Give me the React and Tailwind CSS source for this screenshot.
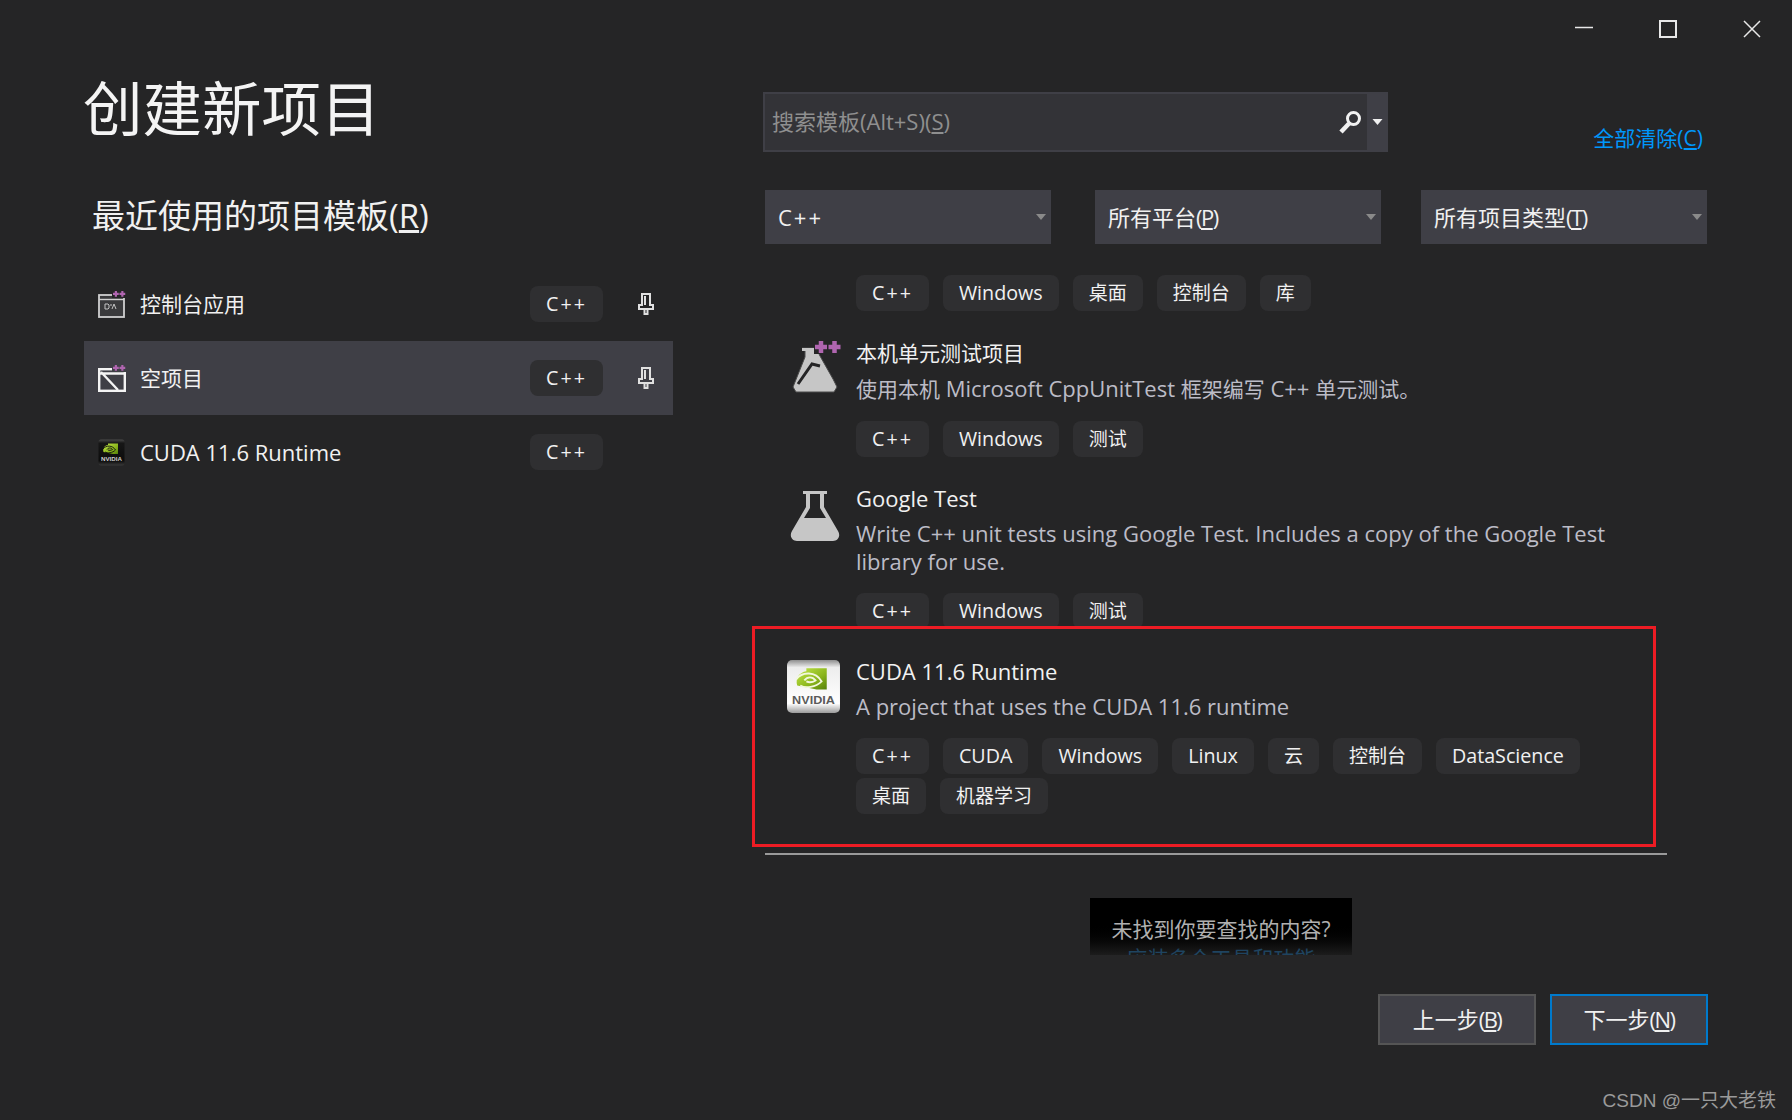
import { useId } from 'react'

const Tag = ({ children }) => {
  const size = /[\u4e00-\u9fff]/.test(children) ? 'text-[19px]' : 'text-[19.7px]'
  return (
    <span className={`flex h-[36px] items-center rounded-[8px] bg-[#2f2f31] px-[16px] leading-none text-[#f1f1f1] ${size} ${children === 'C++' ? 'tracking-[2px]' : ''}`}>
      {children}
    </span>
  )
}

const Tags = ({ items }) => (
  <div className="flex flex-wrap gap-x-[14px] gap-y-[4px]">
    {items.map(t => <Tag key={t}>{t}</Tag>)}
  </div>
)

const Caret = ({ className }) => (
  <svg viewBox="0 0 10 6" className={className}><path d="M0 0h10L5 6z" fill="currentColor" /></svg>
)

function Pin() {
  return (
    <svg viewBox="0 0 16 22" className="h-[22px] w-[16px]" fill="none" stroke="#e0e0e0" strokeWidth="2">
      <path d="M4 1h8v11h3v4H1v-4h3zM7 3v9M6.5 16h3v5h-3z" />
    </svg>
  )
}

function PlusPair({ x = 0, y = 0, s = 1 }) {
  return (
    <g transform={`translate(${x} ${y}) scale(${s})`} fill="#b065b0">
      <path d="M2.5 0h3v2.5H8v3H5.5V8h-3V5.5H0v-3h2.5z" />
      <path d="M11.5 0h3v2.5H17v3h-2.5V8h-3V5.5H9v-3h2.5z" />
    </g>
  )
}

function ConsoleIcon() {
  return (
    <svg viewBox="0 0 28 27" className="h-[27px] w-[28px]">
      <rect x="1" y="4" width="25" height="22" fill="#3a3a3c" stroke="#d0d0d0" strokeWidth="1.8" />
      <path d="M1 8.5h25" stroke="#d0d0d0" strokeWidth="1.4" />
      <path d="M7 13h3l1 1v3l-1 1H7zM14 18l2-5 2 5M13 13v2" fill="none" stroke="#c4c4c4" strokeWidth="1" />
      <rect x="14" y="0" width="14" height="7" fill="#252526" />
      <PlusPair x={15} y={0} s={0.72} />
    </svg>
  )
}

function EmptyIcon() {
  return (
    <svg viewBox="0 0 28 27" className="h-[27px] w-[28px]">
      <rect x="1.2" y="4.2" width="25.6" height="21.6" fill="none" stroke="#f4f4f4" strokeWidth="2.4" />
      <path d="M1 8.5h26M3 7l17 18" stroke="#f4f4f4" strokeWidth="2.4" />
      <rect x="14" y="0" width="14" height="7" fill="#3f3f46" />
      <PlusPair x={15} y={0} s={0.72} />
    </svg>
  )
}

function NvidiaMark({ dark = false }) {
  const id = useId()
  return (
    <svg viewBox="0 0 54 54" className="h-full w-full">
      <defs>
        <linearGradient id={id + 'a'} x1="0" y1="0" x2="0" y2="1">
          <stop offset="0" stopColor={dark ? '#4a4a4a' : '#8e8e8e'} />
          <stop offset="0.14" stopColor={dark ? '#161616' : '#ededed'} />
          <stop offset="0.82" stopColor={dark ? '#0c0c0c' : '#ffffff'} />
          <stop offset="1" stopColor={dark ? '#3a3a3a' : '#9a9a9a'} />
        </linearGradient>
        <linearGradient id={id + 'g'} x1="0" y1="0" x2="1" y2="1">
          <stop offset="0" stopColor="#c4e84a" />
          <stop offset="0.6" stopColor="#8ab51c" />
          <stop offset="1" stopColor="#55800a" />
        </linearGradient>
      </defs>
      <rect x="1" y="1" width="52" height="52" rx="5" fill={`url(#${id}a)`} />
      <path d="M20 9h20v21H30L11 26c-2-7 2-13 9-14z" fill={`url(#${id}g)`} />
      <path d="M10 20c6-8 19-8 25 2-6 6-16 7-21 4M18 21c3-4 8-4 11 0-3 2-7 2-9 1" fill="none" stroke={dark ? '#101010' : '#f2f7dd'} strokeWidth="1.8" />
      <text x="27" y="44" textAnchor="middle" textLength="42" lengthAdjust="spacingAndGlyphs" fontFamily="Liberation Sans, sans-serif" fontWeight="700" fontSize="11.5" fill={dark ? '#d0d0d0' : '#5a5a5a'}>NVIDIA</text>
    </svg>
  )
}

function FlaskPlus() {
  return (
    <svg viewBox="0 0 54 56" className="h-[56px] w-[54px]">
      <path d="M12 9h14l4 8 13 23 4 8-3 5H6l-3-5 12-30v-6z" fill="#c6c6c6" stroke="#4a4a4a" strokeWidth="1" />
      <path d="M30 27l-8-2L8 45" fill="none" stroke="#252526" strokeWidth="3" />
      <rect x="24" y="0" width="30" height="15" fill="#252526" />
      <path d="M12 9h12v3H12z" fill="#c6c6c6" />
      <PlusPair x={25} y={2} s={1.5} />
    </svg>
  )
}

function Flask() {
  return (
    <svg viewBox="0 0 52 54" className="h-[54px] w-[52px]">
      <path d="M14 2h24v3h-3v13l14 24c3 5 0 10-5 10H8c-5 0-8-5-5-10l14-24V5h-3z" fill="#c6c6c6" />
      <path d="M21 5v14l-6 10h22l-6-10V5z" fill="#252526" />
    </svg>
  )
}

function Template({ icon, iconWidth, title, desc, tags }) {
  return (
    <div className="flex">
      <div className={iconWidth}>{icon}</div>
      <div className="w-[780px]">
        <div className="-mt-[2px] text-[22px] leading-[30px] text-[#f1f1f1]">{title}</div>
        <div className="mt-[6px] text-[22px] leading-[28px] text-[#bcbcc6]">{desc}</div>
        <div className="mt-[18px]"><Tags items={tags} /></div>
      </div>
    </div>
  )
}

function Recent({ icon, name, pinned, active }) {
  return (
    <div className={`flex h-[74px] items-center ${active ? 'bg-[#3f3f46]' : ''}`}>
      <div className="ml-[14px] w-[42px]">{icon}</div>
      {name}
      <span className="ml-auto"><Tag>C++</Tag></span>
      <div className="ml-[35px] mr-[19px] w-[16px]">{pinned && <Pin />}</div>
    </div>
  )
}

function Select({ label }) {
  return (
    <div className="flex h-[54px] w-[286px] items-center justify-between bg-[#3f3f46] pl-[13px] pr-[5px] text-[22px] text-[#f1f1f1]">
      <span>{label}</span>
      <Caret className="h-[6px] w-[10px] text-[#8a8a8a]" />
    </div>
  )
}

// accelerator key suffix, the original font sets these parens tighter
const Key = ({ k }) => (
  <span className="tracking-[-1.5px]">(<span className="underline">{k}</span>)</span>
)

const Cjk = ({ children }) => <span className="text-[21px]">{children}</span>

export default function App() {
  return (
    <div className="relative h-[1120px] w-[1792px] overflow-hidden bg-[#252526] font-['Open_Sans','Noto_Sans_CJK_SC',sans-serif]">
      <div className="flex h-[58px] justify-end gap-[66px] pr-[31px] pt-[20px]">
        <svg viewBox="0 0 18 18" className="h-[18px] w-[18px]"><path d="M0 7.5h18" stroke="#e8e8e8" strokeWidth="1.5" /></svg>
        <svg viewBox="0 0 18 18" className="h-[18px] w-[18px]"><rect x="1" y="1" width="16" height="16" fill="none" stroke="#e8e8e8" strokeWidth="2" /></svg>
        <svg viewBox="0 0 18 18" className="h-[18px] w-[18px]"><path d="M1 1l16 16M17 1L1 17" stroke="#e8e8e8" strokeWidth="1.5" /></svg>
      </div>

      <div className="flex">
        <div className="ml-[84px] w-[589px]">
          <h1 className="-ml-[1px] h-[100px] text-[59.5px] leading-[100px] text-[#f4f4f4]">创建新项目</h1>
          <h2 className="ml-[8px] mt-[33px] h-[50px] text-[33px] leading-[50px] text-[#f1f1f1]">
            最近使用的项目模板(<span className="underline">R</span>)
          </h2>
          <div className="mt-[26px]">
            <Recent icon={<ConsoleIcon />} name={<span className="pt-[2px] text-[21px] text-[#f1f1f1]">控制台应用</span>} pinned />
            <Recent icon={<EmptyIcon />} name={<span className="pt-[2px] text-[21px] text-[#f1f1f1]">空项目</span>} pinned active />
            <Recent icon={<div className="h-[27px] w-[27px]"><NvidiaMark dark /></div>} name={<span className="text-[22px] text-[#f1f1f1]">CUDA 11.6 Runtime</span>} />
          </div>
        </div>

        <div className="ml-[92px] w-[942px]">
          <div className="mt-[34px] flex h-[60px] items-start justify-between">
            <div className="-ml-[2px] flex h-[60px] w-[625px] border-2 border-r-0 border-[#3f3f46] bg-[#333337]">
              <div className="flex-1 pl-[7px] text-[22px] leading-[54px] text-[#8f8f8f]">
                搜索模板(Alt+S)(<span className="underline">S</span>)
              </div>
              <svg viewBox="0 0 24 24" className="mr-[5px] mt-[16px] h-[24px] w-[24px]" fill="none" stroke="#f1f1f1">
                <circle cx="15.5" cy="8.5" r="6" strokeWidth="3" />
                <path d="M11 13.5L3 22" strokeWidth="4.5" />
              </svg>
              <div className="flex w-[21px] justify-center bg-[#3f3f46] pt-[25px]">
                <Caret className="h-[6px] w-[11px] text-[#f1f1f1]" />
              </div>
            </div>
            <a className="mr-[4px] mt-[30px] text-[21px] leading-[32px] text-[#0097fb]">
              全部清除(<span className="underline">C</span>)
            </a>
          </div>

          <div className="mt-[38px] flex">
            <Select label={<span className="tracking-[2px]">C++</span>} />
            <div className="ml-[44px]"><Select label={<>所有平台<Key k="P" /></>} /></div>
            <div className="ml-[40px]"><Select label={<>所有项目类型<Key k="T" /></>} /></div>
          </div>

          <div className="ml-[91px] mt-[31px]">
            <Tags items={['C++', 'Windows', '桌面', '控制台', '库']} />
          </div>

          <div className="pt-[28px]">
            <Template
              iconWidth="w-[91px] pl-[25px]"
              icon={<FlaskPlus />}
              title={<Cjk>本机单元测试项目</Cjk>}
              desc={<><Cjk>使用本机</Cjk> Microsoft CppUnitTest <Cjk>框架编写</Cjk> C++ <Cjk>单元测试。</Cjk></>}
              tags={['C++', 'Windows', '测试']}
            />
          </div>
          <div className="h-[169px] overflow-hidden pt-[28px]">
            <Template
              iconWidth="w-[91px] pl-[24px] pt-[4px]"
              icon={<Flask />}
              title="Google Test"
              desc="Write C++ unit tests using Google Test. Includes a copy of the Google Test library for use."
              tags={['C++', 'Windows', '测试']}
            />
          </div>
          <div className="-ml-[13px] h-[221px] w-[904px] border-[3px] border-[#ed1c24] pt-[29px]">
            <Template
              iconWidth="w-[101px] pl-[31px] pt-[1px]"
              icon={<div className="h-[55px] w-[55px]"><NvidiaMark /></div>}
              title="CUDA 11.6 Runtime"
              desc="A project that uses the CUDA 11.6 runtime"
              tags={['C++', 'CUDA', 'Windows', 'Linux', '云', '控制台', 'DataScience', '桌面', '机器学习']}
            />
          </div>
          <div className="mt-[6px] h-[2px] w-[902px] bg-[#9a9a9a]" />

          <div className="ml-[325px] mt-[43px] h-[57px] w-[262px] overflow-hidden bg-gradient-to-b from-black from-40% to-[#1c1c1c] text-center">
            <div className="pt-[16px] text-[21px] leading-[30px] text-[#b0b0b0]">未找到你要查找的内容?</div>
            <div className="text-[21px] leading-[28px] text-[#1f4460]">应装多个工具和功能</div>
          </div>

          <div className="mt-[39px] flex justify-end gap-[14px]">
            <button className="h-[51px] w-[158px] border-[2px] border-[#555555] bg-[#3f3f46] text-[22px] text-[#f1f1f1]">
              上一步<Key k="B" />
            </button>
            <button className="mr-[-1px] h-[51px] w-[158px] border-[2px] border-[#007acc] bg-[#3f3f46] text-[22px] text-[#f1f1f1]">
              下一步<Key k="N" />
            </button>
          </div>
        </div>
      </div>

      <div className="absolute bottom-[6px] right-[16px] font-['Liberation_Sans','Noto_Sans_CJK_SC',sans-serif] text-[19px] leading-[26px] text-[#9a9a9a]">
        CSDN @一只大老铁
      </div>
    </div>
  )
}
